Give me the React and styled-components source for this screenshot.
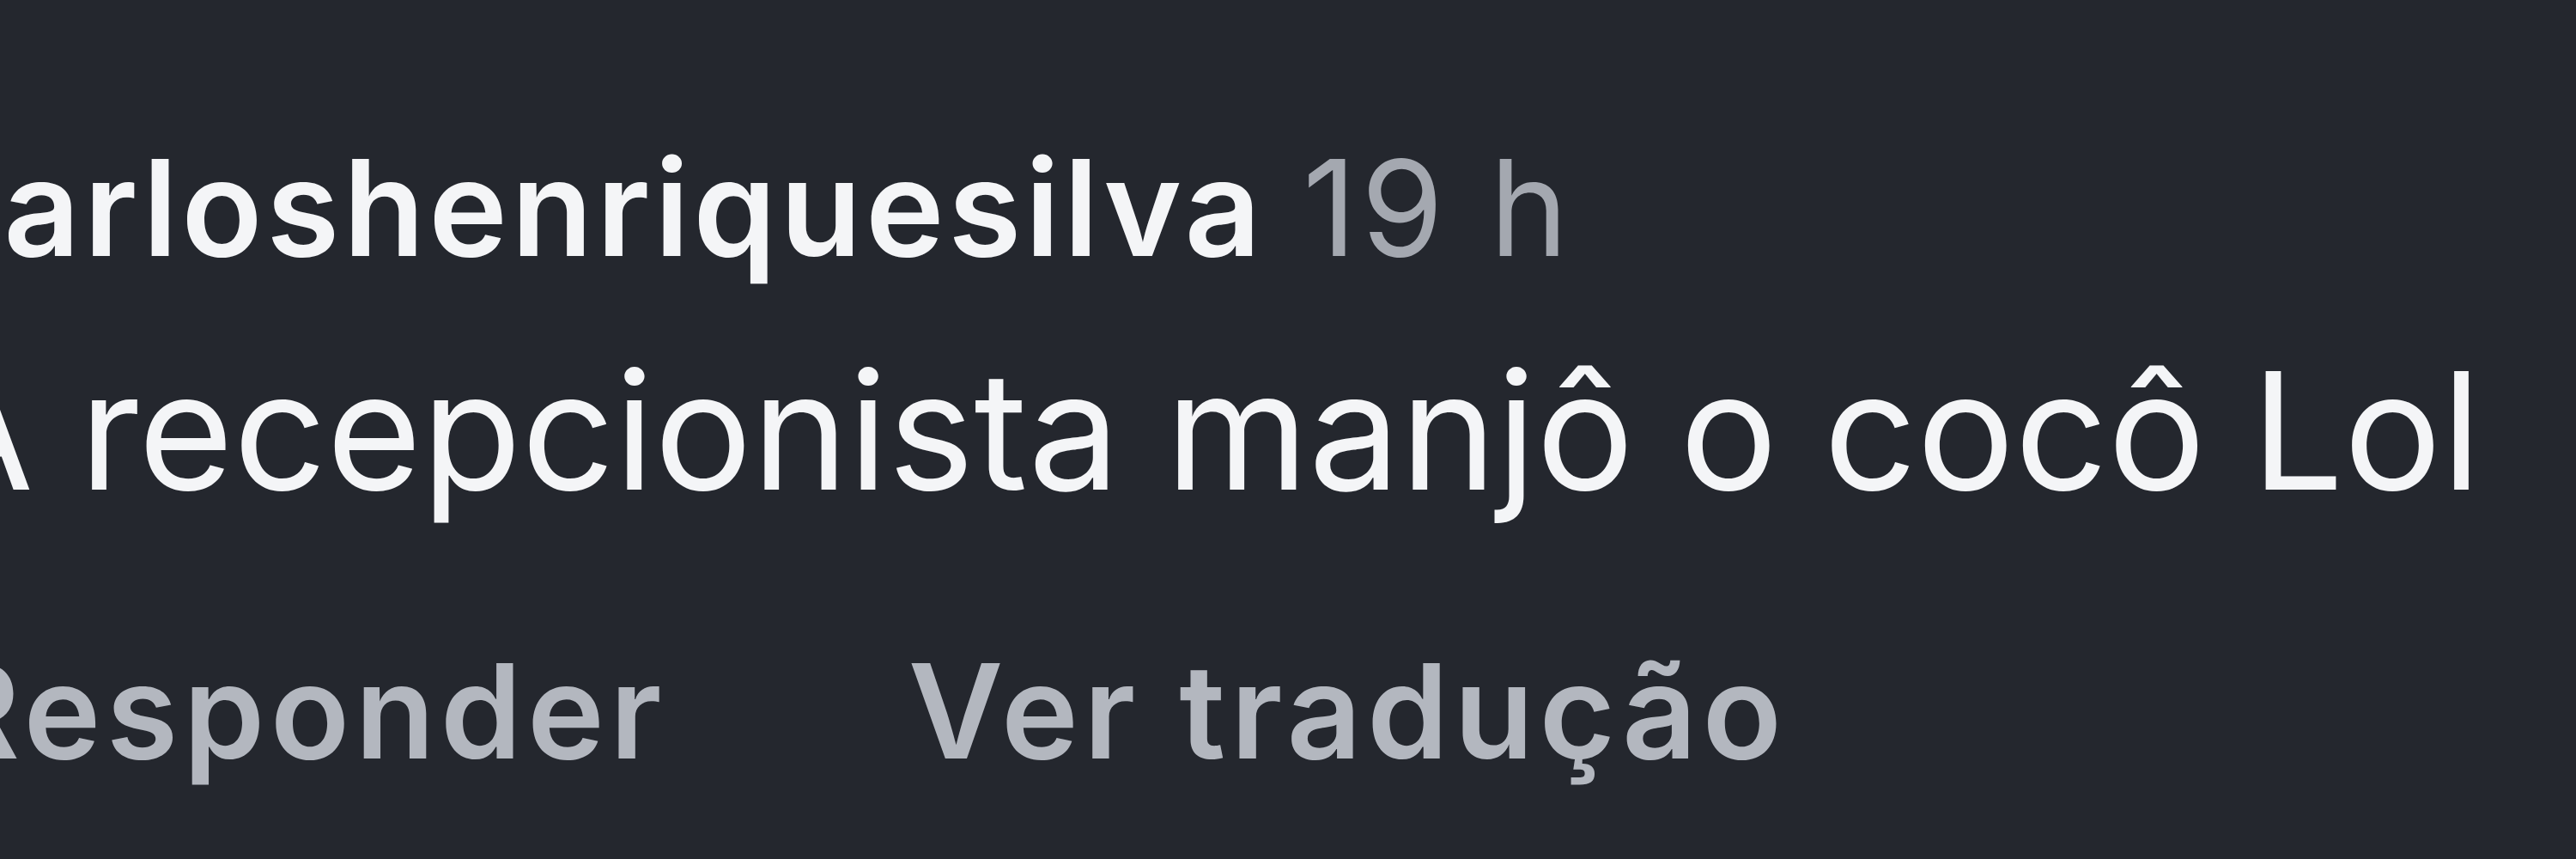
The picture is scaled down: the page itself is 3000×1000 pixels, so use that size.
import React from "react";
import styled, { createGlobalStyle } from "styled-components";

const Global = createGlobalStyle`
  html, body {
    margin: 0;
    padding: 0;
    background: #24272e;
    overflow: hidden;
  }
`;

const Screen = styled.div`
  width: 3000px;
  height: 1000px;
  background: #24272e;
  overflow: hidden;
  font-family: Inter, "Noto Sans", "Liberation Sans", sans-serif;
`;

const Comment = styled.div`
  display: flex;
  flex-direction: column;
  margin-left: -92px;
  padding-top: 142px;
`;

const Header = styled.div`
  display: flex;
  align-items: baseline;
  gap: 44px;
  line-height: 200px;
  white-space: nowrap;
`;

const Username = styled.span`
  font-size: 155px;
  font-weight: 600;
  color: #f4f5f7;
  letter-spacing: 4.5px;
`;

const Time = styled.span`
  font-size: 155px;
  font-weight: 400;
  color: #a4a8b0;
  letter-spacing: 5px;
`;

const Body = styled.p`
  margin: 39px 0 0;
  font-size: 190px;
  font-weight: 400;
  line-height: 240px;
  color: #f4f5f7;
  white-space: nowrap;
`;

const Actions = styled.div`
  display: flex;
  gap: 281px;
  margin: 107px 0 0 16px;
  line-height: 200px;
  white-space: nowrap;
`;

const Action = styled.button`
  all: unset;
  font-family: inherit;
  font-size: 152px;
  font-weight: 600;
  letter-spacing: 6.3px;
  color: #b3b7bf;
  cursor: pointer;
`;

export default function App() {
  return (
    <Screen>
      <Global />
      <Comment>
        <Header>
          <Username>carloshenriquesilva</Username>
          <Time>19 h</Time>
        </Header>
        <Body>A recepcionista manjô o cocô Lol</Body>
        <Actions>
          <Action>Responder</Action>
          <Action>Ver tradução</Action>
        </Actions>
      </Comment>
    </Screen>
  );
}
